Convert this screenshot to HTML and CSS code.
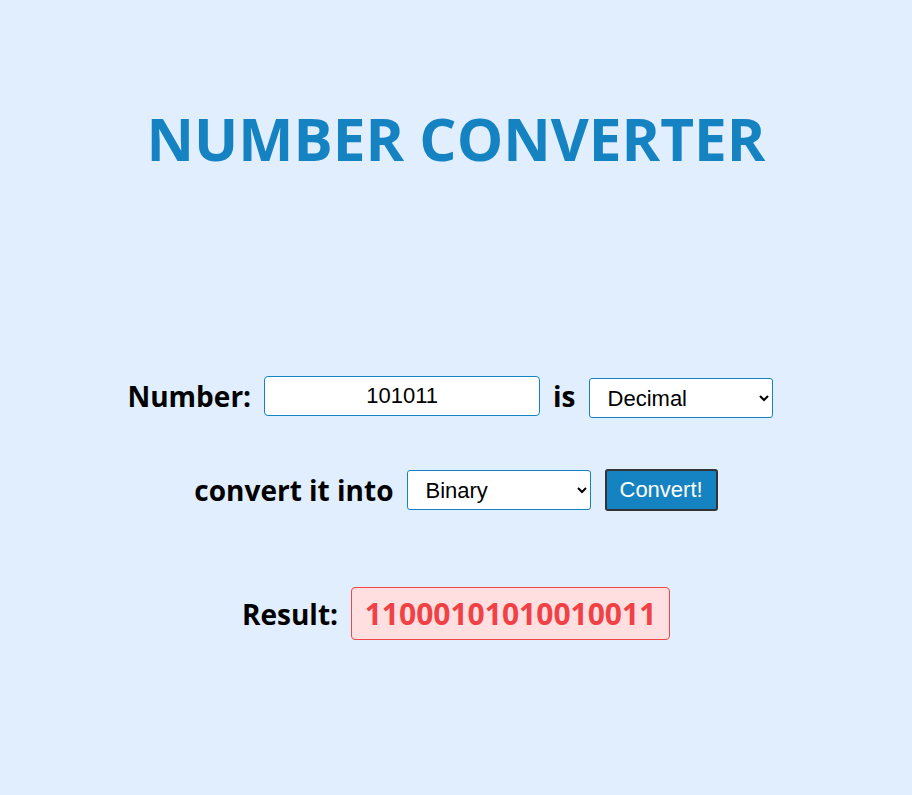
FILE: index.html
```html
<!DOCTYPE html>
<html>
<head>
<meta charset="utf-8">
<link rel="stylesheet" href="styles.css">
</head>
<body>
<main class="page">
  <h1 class="title">NUMBER CONVERTER</h1>
  <section class="form">
    <div class="row row-number">
      <label class="label">Number:</label>
      <input class="num-input" type="text" value="101011">
      <span class="label">is</span>
      <select class="sel sel-from">
        <option>Decimal</option>
      </select>
    </div>
    <div class="row row-convert">
      <span class="label">convert it into</span>
      <select class="sel">
        <option>Binary</option>
      </select>
      <button class="btn">Convert!</button>
    </div>
    <div class="row row-result">
      <span class="label">Result:</span>
      <div class="result">11000101010010011</div>
    </div>
  </section>
</main>
</body>
</html>
```
FILE: styles.css
```css
html, body {
  margin: 0;
  padding: 0;
  background: #e0eefe;
}
body {
  font-family: "Open Sans", "Noto Sans", sans-serif;
  min-height: 795px;
}
.page {
  display: flex;
  flex-direction: column;
  align-items: center;
}
.title {
  margin: 100px 0 0;
  font-size: 58.5px;
  font-weight: 700;
  color: #1583c1;
  letter-spacing: 0;
  line-height: 76px;
}
.form {
  display: flex;
  flex-direction: column;
  align-items: center;
  margin-top: 198px;
}
.row {
  display: flex;
  align-items: center;
  gap: 13px;
}
.row-number { margin-right: 12px; }
.row-convert { margin-top: 51px; }
.row-result { margin-top: 76px; }
.label {
  font-size: 28px;
  font-weight: 700;
  color: #000;
  line-height: 38px;
}
.num-input {
  width: 276px;
  height: 40px;
  box-sizing: border-box;
  border: 1px solid #1583c1;
  border-radius: 4px;
  background: #fff;
  font-family: "Liberation Sans", Arial, sans-serif;
  font-size: 22px;
  text-align: center;
  padding: 0;
  color: #000;
}
.sel {
  width: 184px;
  height: 40px;
  box-sizing: border-box;
  border: 1px solid #1583c1;
  border-radius: 3px;
  background: #fff;
  font-family: "Liberation Sans", Arial, sans-serif;
  font-size: 22px;
  padding: 0 14px;
  color: #000;
}
.sel-from { margin-top: 4px; }
.btn {
  height: 42px;
  padding: 0 13px;
  background: #1583c1;
  color: #fff;
  border: 2px solid #333;
  border-radius: 3px;
  font-family: "Liberation Sans", Arial, sans-serif;
  font-size: 22px;
  margin-left: 1px;
}
.result {
  width: 319px;
  height: 53px;
  box-sizing: border-box;
  display: flex;
  align-items: center;
  justify-content: center;
  background: #ffdfe0;
  border: 1px solid #f04848;
  border-radius: 4px;
  color: #f04246;
  font-size: 30px;
  font-weight: 700;
}
```
